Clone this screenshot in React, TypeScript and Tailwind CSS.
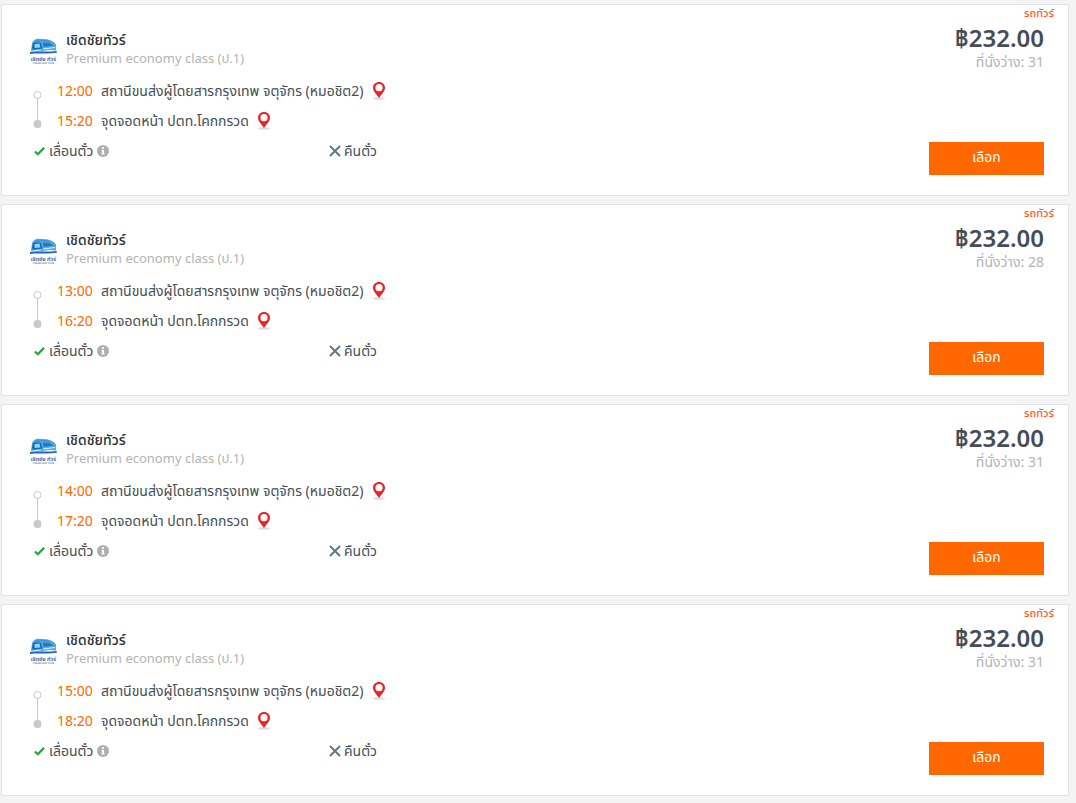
type Trip = {
  depart: string;
  arrive: string;
  seats: number;
};

const trips: Trip[] = [
  { depart: "12:00", arrive: "15:20", seats: 31 },
  { depart: "13:00", arrive: "16:20", seats: 28 },
  { depart: "14:00", arrive: "17:20", seats: 31 },
  { depart: "15:00", arrive: "18:20", seats: 31 },
];

export default function App() {
  return (
    <main className="flex min-h-screen flex-col gap-2 bg-[#f4f4f4] pt-1 pr-[7px] pb-[7px] pl-px font-['Noto_Sans','Noto_Sans_Thai',sans-serif] text-sm text-[#454c55]">
      {trips.map((trip) => (
        <TripCard key={trip.depart} trip={trip} />
      ))}
    </main>
  );
}

function TripCard({ trip }: { trip: Trip }) {
  return (
    <article className="flex min-h-48 justify-between border border-[#e2e3e8] bg-white">
      <div className="flex flex-col pt-[26px] pl-7">
        <header className="flex gap-2">
          <OperatorLogo />
          <div className="leading-[18px]">
            <h2 className="font-medium text-[#2a2f36]">เชิดชัยทัวร์</h2>
            <p className="text-[13px] text-[#b3b3b3]">Premium economy class (ป.1)</p>
          </div>
        </header>

        <div className="mt-[9px] flex pl-[3px]">
          <RouteLine />
          <div className="ml-[15px]">
            <Stop time={trip.depart} place="สถานีขนส่งผู้โดยสารกรุงเทพ จตุจักร (หมอชิต2)" />
            <Stop time={trip.arrive} place="จุดจอดหน้า ปตท.โคกกรวด" />
          </div>
        </div>

        <ul className="flex h-[30px] items-center pl-1">
          <li className="flex w-[295px] items-center gap-1">
            <CheckIcon />
            <span>เลื่อนตั๋ว</span>
            <InfoIcon />
          </li>
          <li className="flex items-center gap-[3px]">
            <CrossIcon />
            <span>คืนตั๋ว</span>
          </li>
        </ul>
      </div>

      <div className="flex flex-col items-end pr-6 pb-5">
        <p className="-mr-2.5 text-[11px] leading-4 font-medium text-[#ff5a1f]">รถทัวร์</p>
        <p className="mt-[3px] text-2xl leading-7 font-semibold">฿232.00</p>
        <p className="mt-px leading-[18px] text-[#b3b3b3]">ที่นั่งว่าง: {trip.seats}</p>
        <button type="button" className="mt-auto h-[33px] w-[115px] bg-[#ff6700] pb-1 text-white">
          เลือก
        </button>
      </div>
    </article>
  );
}

function Stop({ time, place }: { time: string; place: string }) {
  return (
    <div className="flex h-[30px] items-center whitespace-nowrap">
      <time className="w-11 text-[#ff6700]">{time}</time>
      <span>{place}</span>
      <button type="button" aria-label="แผนที่" className="ml-2">
        <PinIcon />
      </button>
    </div>
  );
}

function RouteLine() {
  return (
    <svg className="mt-[15px]" width="9" height="38" viewBox="0 0 9 38" aria-hidden="true">
      <path d="M4.5 8v22" stroke="#c8c8c8" />
      <circle cx="4.5" cy="4" r="3.5" fill="#fff" stroke="#c8c8c8" />
      <circle cx="4.5" cy="33" r="4" fill="#c8c8c8" />
    </svg>
  );
}

function OperatorLogo() {
  return (
    <svg className="mt-1.5 shrink-0" width="28" height="28" viewBox="0 0 28 28" aria-hidden="true">
      <path d="M2 6Q4 2 8 1.800l10 .7q6 1.500 8 5v6l-7-.5-9 1.500-9-.5Z" fill="#56abe2" />
      <path d="M3.500 5Q5 2.500 8 2.200l9 .5q5 1 7.500 3.500l-7-1-8.500-.5Z" fill="#3d9bdc" />
      <path d="M3 6q4-1.500 8 0l1.500 5.500-9 1.500-1.500-2Z" fill="#1465af" />
      <path d="m4.500 7 5-.5 1 4-6 .5Z" fill="#8fd2f5" />
      <path d="m13 5.500 6 .5 5.500 2.500-11 1.500Z" fill="#2478bf" />
      <path d="m13 12 12-1.500M3 13.500l8-.5" stroke="#d8f1ff" />
      <path d="M0 15c8-1.500 15 .5 27-1l-.5 1.800C17 17.500 8 15.500 0 17Z" fill="#2264ae" />
      <text x="13.500" y="24" textAnchor="middle" textRendering="geometricPrecision" fontSize="5.500" fontWeight="600" fill="#3b549f">
        เชิดชัย ทัวร์
      </text>
      <text x="13.500" y="27" textAnchor="middle" textRendering="geometricPrecision" fontSize="2.500" fontWeight="600" fill="#6e748c">
        CHERDCHAI TOUR
      </text>
    </svg>
  );
}

function PinIcon() {
  return (
    <svg className="block" width="14" height="20" viewBox="0 0 14 20" aria-hidden="true">
      <ellipse cx="7" cy="17.500" rx="6" ry="1.500" fill="#dedede" />
      <path
        d="M7 1C3.500 1 1 3.500 1 6.700c0 3.200 2.500 5.300 6 10.300 3.500-5 6-7.100 6-10.300C13 3.500 10.500 1 7 1Z"
        fill="#e8252b"
      />
      <circle cx="7" cy="6.700" r="3.600" fill="#fff" />
    </svg>
  );
}

function CheckIcon() {
  return (
    <svg width="11" height="11" viewBox="0 0 12 11" aria-hidden="true">
      <path d="m1 5.500 3.200 3L11 1.500" fill="none" stroke="#27a035" strokeWidth="2.400" />
    </svg>
  );
}

function CrossIcon() {
  return (
    <svg width="12" height="12" viewBox="0 0 12 12" aria-hidden="true">
      <path d="m1 1 10 10M11 1 1 11" stroke="#647487" strokeWidth="2" />
    </svg>
  );
}

function InfoIcon() {
  return (
    <svg width="12" height="12" viewBox="0 0 12 12" aria-hidden="true">
      <circle cx="6" cy="6" r="6" fill="#aeaeae" />
      <path d="M5 2h2v2H5ZM4.500 5H7v3.500h.7v1H4.400v-1H5V6h-.5Z" fill="#fff" />
    </svg>
  );
}
